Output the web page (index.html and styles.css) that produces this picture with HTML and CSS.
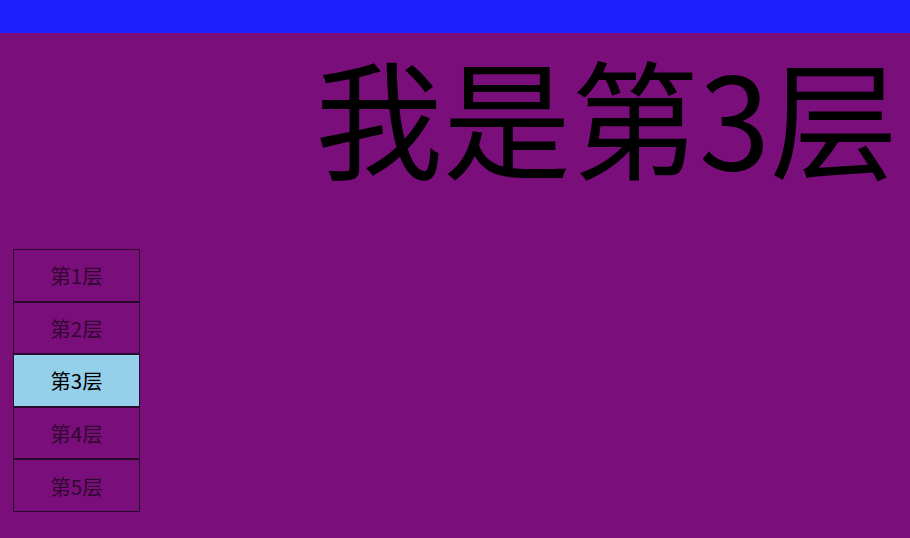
FILE: index.html
```html
<!DOCTYPE html>
<html lang="zh">
<head>
<meta charset="utf-8">
<link rel="stylesheet" href="styles.css">
</head>
<body>
<header class="topbar"></header>
<main class="content">
  <h1 class="title">我是第3层</h1>
  <ul class="floors">
    <li class="floor">第1层</li>
    <li class="floor">第2层</li>
    <li class="floor active">第3层</li>
    <li class="floor">第4层</li>
    <li class="floor">第5层</li>
  </ul>
</main>
</body>
</html>
```
FILE: styles.css
```css
html, body {
  margin: 0;
  padding: 0;
  background: #7a0e7a;
  font-family: "Noto Sans CJK SC", "Noto Sans", sans-serif;
  color: #000;
}
.topbar {
  height: 33px;
  background: #2020ff;
}
.content {
  padding: 0 12px 0 13px;
}
.title {
  margin: 0;
  font-size: 128px;
  font-weight: normal;
  line-height: 164px;
  text-align: right;
}
.floors {
  list-style: none;
  margin: 52px 0 0 0;
  padding: 0;
  width: 127px;
}
.floor {
  box-sizing: border-box;
  height: 52.6px;
  border: 1px solid #2a0a2a;
  display: flex;
  align-items: center;
  justify-content: center;
  font-size: 20.5px;
  color: #300830;
}
.floor.active {
  background: #94d0ea;
  color: #000;
}
```
